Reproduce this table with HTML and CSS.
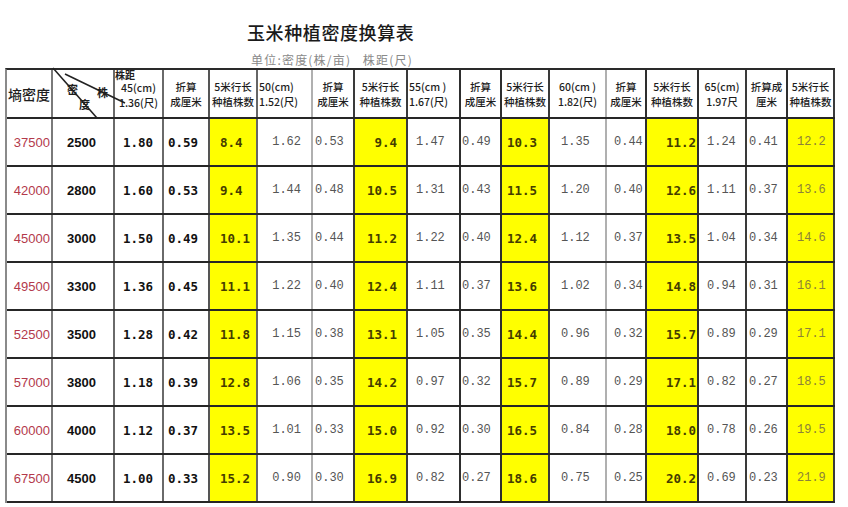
FILE: index.html
```html
<!DOCTYPE html>
<html lang="zh-CN">
<head>
<meta charset="utf-8">
<title>玉米种植密度换算表</title>
<link rel="stylesheet" href="styles.css">
</head>
<body>
<div class="page">
  <h1 class="title">玉米种植密度换算表</h1>
  <p class="unit">单位:密度(株/亩)&nbsp;&nbsp;&nbsp;株距(尺)</p>
  <div class="grid">
    <div class="row head">
      <div class="c"><span class="big">墒密度</span></div>
      <div class="c diag">
        <svg class="diag-lines" width="80" height="52" viewBox="0 0 80 52"><line x1="0" y1="0" x2="44" y2="50" stroke="#222" stroke-width="1.6"/><line x1="12" y1="6" x2="72" y2="35" stroke="#222" stroke-width="1.6"/></svg>
        <span class="dl dl-mi">密</span><span class="dl dl-zhu">株</span><span class="dl dl-du">度</span>
      </div>
      <div class="c"><span class="zhuju">株距</span><span class="two two-low">45(cm)<br>1.36(尺)</span></div>
      <div class="c"><span class="two">折算<br>成厘米</span></div>
      <div class="c"><span class="two">5米行长<br>种植株数</span></div>
      <div class="c left"><span class="two">50(cm)<br>1.52(尺)</span></div>
      <div class="c"><span class="two">折算<br>成厘米</span></div>
      <div class="c"><span class="two">5米行长<br>种植株数</span></div>
      <div class="c left"><span class="two">55(cm&nbsp;)<br>1.67(尺)</span></div>
      <div class="c"><span class="two">折算<br>成厘米</span></div>
      <div class="c"><span class="two">5米行长<br>种植株数</span></div>
      <div class="c"><span class="two">60(cm&nbsp;)<br>1.82(尺)</span></div>
      <div class="c"><span class="two">折算<br>成厘米</span></div>
      <div class="c"><span class="two">5米行长<br>种植株数</span></div>
      <div class="c"><span class="two">65(cm)<br>1.97尺</span></div>
      <div class="c"><span class="two">折算成<br>厘米</span></div>
      <div class="c"><span class="two">5米行长<br>种植株数</span></div>
    </div>
    <div class="row data"><div class="c">37500</div><div class="c">2500</div><div class="c">1.80</div><div class="c">0.59</div><div class="c">8.4</div><div class="c">1.62</div><div class="c">0.53</div><div class="c">9.4</div><div class="c">1.47</div><div class="c">0.49</div><div class="c">10.3</div><div class="c">1.35</div><div class="c">0.44</div><div class="c">11.2</div><div class="c">1.24</div><div class="c">0.41</div><div class="c">12.2</div></div>
    <div class="row data"><div class="c">42000</div><div class="c">2800</div><div class="c">1.60</div><div class="c">0.53</div><div class="c">9.4</div><div class="c">1.44</div><div class="c">0.48</div><div class="c">10.5</div><div class="c">1.31</div><div class="c">0.43</div><div class="c">11.5</div><div class="c">1.20</div><div class="c">0.40</div><div class="c">12.6</div><div class="c">1.11</div><div class="c">0.37</div><div class="c">13.6</div></div>
    <div class="row data"><div class="c">45000</div><div class="c">3000</div><div class="c">1.50</div><div class="c">0.49</div><div class="c">10.1</div><div class="c">1.35</div><div class="c">0.44</div><div class="c">11.2</div><div class="c">1.22</div><div class="c">0.40</div><div class="c">12.4</div><div class="c">1.12</div><div class="c">0.37</div><div class="c">13.5</div><div class="c">1.04</div><div class="c">0.34</div><div class="c">14.6</div></div>
    <div class="row data"><div class="c">49500</div><div class="c">3300</div><div class="c">1.36</div><div class="c">0.45</div><div class="c">11.1</div><div class="c">1.22</div><div class="c">0.40</div><div class="c">12.4</div><div class="c">1.11</div><div class="c">0.37</div><div class="c">13.6</div><div class="c">1.02</div><div class="c">0.34</div><div class="c">14.8</div><div class="c">0.94</div><div class="c">0.31</div><div class="c">16.1</div></div>
    <div class="row data"><div class="c">52500</div><div class="c">3500</div><div class="c">1.28</div><div class="c">0.42</div><div class="c">11.8</div><div class="c">1.15</div><div class="c">0.38</div><div class="c">13.1</div><div class="c">1.05</div><div class="c">0.35</div><div class="c">14.4</div><div class="c">0.96</div><div class="c">0.32</div><div class="c">15.7</div><div class="c">0.89</div><div class="c">0.29</div><div class="c">17.1</div></div>
    <div class="row data"><div class="c">57000</div><div class="c">3800</div><div class="c">1.18</div><div class="c">0.39</div><div class="c">12.8</div><div class="c">1.06</div><div class="c">0.35</div><div class="c">14.2</div><div class="c">0.97</div><div class="c">0.32</div><div class="c">15.7</div><div class="c">0.89</div><div class="c">0.29</div><div class="c">17.1</div><div class="c">0.82</div><div class="c">0.27</div><div class="c">18.5</div></div>
    <div class="row data"><div class="c">60000</div><div class="c">4000</div><div class="c">1.12</div><div class="c">0.37</div><div class="c">13.5</div><div class="c">1.01</div><div class="c">0.33</div><div class="c">15.0</div><div class="c">0.92</div><div class="c">0.30</div><div class="c">16.5</div><div class="c">0.84</div><div class="c">0.28</div><div class="c">18.0</div><div class="c">0.78</div><div class="c">0.26</div><div class="c">19.5</div></div>
    <div class="row data"><div class="c">67500</div><div class="c">4500</div><div class="c">1.00</div><div class="c">0.33</div><div class="c">15.2</div><div class="c">0.90</div><div class="c">0.30</div><div class="c">16.9</div><div class="c">0.82</div><div class="c">0.27</div><div class="c">18.6</div><div class="c">0.75</div><div class="c">0.25</div><div class="c">20.2</div><div class="c">0.69</div><div class="c">0.23</div><div class="c">21.9</div></div>
  </div>
</div>
</body>
</html>
```

FILE: styles.css
```css
* { box-sizing: border-box; }
html, body { margin: 0; padding: 0; background: #fff; }
body { font-family: "Noto Sans CJK SC", "Liberation Sans", sans-serif; color: #222; }

.page { width: 848px; height: 507px; overflow: hidden; }

.title {
  margin: 0 0 0 247px;
  padding-top: 20px;
  font-size: 18px;
  line-height: 24px;
  font-weight: 500;
  letter-spacing: 0.6px;
  color: #1a1a1a;
}
.unit {
  margin: 8px 0 0 251px;
  font-size: 12px;
  line-height: 16px;
  letter-spacing: 1.2px;
  color: #8a8a8a;
}

.grid {
  margin-left: 5px;
  width: 830px;
  border-top: 2px solid #2a2a2a;
  border-left: 2px solid #8a8a8a;
}
.row {
  display: grid;
  grid-template-columns: 46px 62px 49px 46px 48px 55px 42px 53px 53px 41px 48px 57px 40px 52px 48px 41px 47px;
  border-bottom: 2px solid #262626;
}
.head { height: 49px; position: relative; }
.data { height: 48px; }

.c {
  display: flex;
  align-items: center;
  justify-content: center;
  border-right: 2px solid #444;
  white-space: nowrap;
  position: relative;
  min-width: 0;
}
.row > .c:nth-child(1) { border-right-color: #7a7a7a; }
.row > .c:nth-child(2) { border-right-color: #6a6a6a; }
.row > .c:nth-child(3) { border-right-color: #6a6a6a; }
.row > .c:nth-child(4) { border-right-color: #555; }
.row > .c:nth-child(5) { border-right-color: #666; }
.row > .c:nth-child(6) { border-right-color: #b0b0b0; }
.row > .c:nth-child(7) { border-right-color: #3a3a3a; }
.row > .c:nth-child(8) { border-right-color: #3a3a3a; }
.row > .c:nth-child(9) { border-right-color: #2e2e2e; }
.row > .c:nth-child(10) { border-right-color: #2e2e2e; }
.row > .c:nth-child(11) { border-right-color: #3a3a3a; }
.row > .c:nth-child(12) { border-right-color: #b0b0b0; }
.row > .c:nth-child(13) { border-right-color: #2e2e2e; }
.row > .c:nth-child(14) { border-right-color: #2e2e2e; }
.row > .c:nth-child(15) { border-right-color: #3a3a3a; }
.row > .c:nth-child(16) { border-right-color: #2e2e2e; }
.row > .c:nth-child(17) { border-right-color: #3a3a3a; }

/* header */
.head .c { font-size: 10.5px; color: #1e1e1e; }
.two { line-height: 15px; text-align: center; font-weight: 500; letter-spacing: 0; }
.two-low { padding-top: 3px; }
.head .left { justify-content: flex-start; padding-left: 1px; }
.head .left .two { text-align: left; }
.head .c:nth-child(1) { justify-content: flex-start; padding-left: 1px; }
.big { font-size: 14px; font-weight: 500; letter-spacing: 0; }
.zhuju {
  position: absolute;
  left: 0;
  top: -1px;
  font-size: 10px;
  font-weight: 700;
  line-height: 11px;
}
.diag-lines { position: absolute; left: 0; top: -2px; overflow: visible; }
.dl { position: absolute; font-size: 11px; font-weight: 700; line-height: 12px; }
.dl-mi { left: 14px; top: 13px; }
.dl-zhu { left: 44px; top: 16px; }
.dl-du { left: 26px; top: 28px; }

/* data */
.data .c { font-family: "DejaVu Sans Mono", monospace; font-size: 12.5px; }
.data .c:nth-child(1) {
  justify-content: flex-end;
  padding-right: 1px;
  font-family: "Liberation Sans", sans-serif;
  font-size: 13px;
  color: #b3394b;
}
.data .c:nth-child(2) {
  justify-content: flex-start;
  padding-left: 14px;
  font-family: "Liberation Sans", sans-serif;
  font-size: 13px;
  font-weight: 700;
  color: #111;
}
.data .c:nth-child(3),
.data .c:nth-child(4) { justify-content: flex-start; font-weight: 700; color: #111; }
.data .c:nth-child(3) { padding-left: 8px; }
.data .c:nth-child(4) { padding-left: 4px; }

.data .c:nth-child(3n+5) { background: #ffff00; font-weight: 700; color: #453c00; justify-content: flex-start; }
.data .c:nth-child(5) { padding-left: 10px; }
.data .c:nth-child(8) { justify-content: flex-end; padding-right: 9px; }
.data .c:nth-child(11) { padding-left: 5px; }
.data .c:nth-child(14) { justify-content: flex-end; padding-right: 1px; }
.data .c:nth-child(17) { padding-left: 9px; font-weight: 400; color: #8c8238; font-family: "Liberation Mono", monospace; font-size: 12px; }

.data .c:nth-child(6),
.data .c:nth-child(7),
.data .c:nth-child(9),
.data .c:nth-child(10),
.data .c:nth-child(12),
.data .c:nth-child(13),
.data .c:nth-child(15),
.data .c:nth-child(16) {
  font-family: "Liberation Mono", monospace;
  font-size: 12px;
  color: #555;
  justify-content: flex-start;
}
.data .c:nth-child(6) { justify-content: flex-end; padding-right: 10px; }
.data .c:nth-child(7) { padding-left: 2px; }
.data .c:nth-child(9) { padding-left: 8px; }
.data .c:nth-child(10) { padding-left: 1px; }
.data .c:nth-child(12) { padding-left: 11px; }
.data .c:nth-child(13) { padding-left: 7px; }
.data .c:nth-child(15) { padding-left: 8px; }
.data .c:nth-child(16) { padding-left: 2px; }
```
